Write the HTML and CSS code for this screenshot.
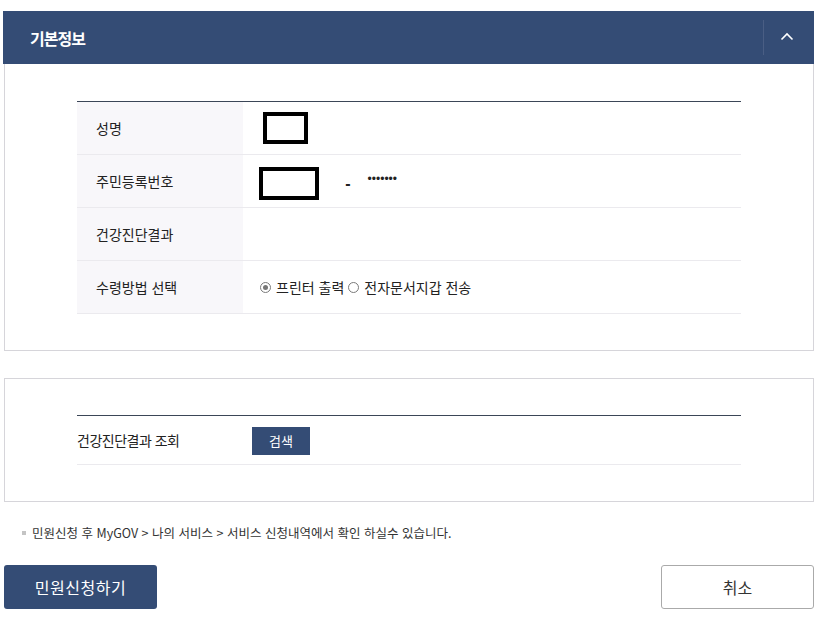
FILE: index.html
```html
<!DOCTYPE html>
<html lang="ko">
<head>
    <meta charset="UTF-8">
    <meta name="viewport" content="width=device-width, initial-scale=1.0">
    <title>기본정보 - 민원신청</title>
    <link rel="stylesheet" href="styles.css">
</head>
<body>
    <div class="page">
        <div class="section-head">
            <h2>기본정보</h2>
            <button type="button" class="toggle-btn" aria-label="접기">
                <svg width="14" height="9" viewBox="0 0 14 9"><path d="M1.5 7.5 L7 2 L12.5 7.5" fill="none" stroke="#fff" stroke-width="1.6"/></svg>
            </button>
        </div>

        <div class="panel panel-top">
            <table class="info-table">
                <tr>
                    <th>성명</th>
                    <td><span class="mask mask-name"></span></td>
                </tr>
                <tr>
                    <th>주민등록번호</th>
                    <td>
                        <span class="mask mask-rrn"></span>
                        <span class="rrn-dash">-</span>
                        <span class="rrn-back">•••••••</span>
                    </td>
                </tr>
                <tr>
                    <th>건강진단결과</th>
                    <td></td>
                </tr>
                <tr>
                    <th>수령방법 선택</th>
                    <td>
                        <label class="radio"><span class="radio-dot checked"></span>프린터 출력</label>
                        <label class="radio"><span class="radio-dot"></span>전자문서지갑 전송</label>
                    </td>
                </tr>
            </table>
        </div>

        <div class="panel panel-search">
            <table class="info-table search-table">
                <tr>
                    <th>건강진단결과 조회</th>
                    <td><button type="button" class="search-btn">검색</button></td>
                </tr>
            </table>
        </div>

        <p class="notice">민원신청 후 MyGOV &gt; 나의 서비스 &gt; 서비스 신청내역에서 확인 하실수 있습니다.</p>

        <div class="btn-row">
            <button type="button" class="btn-apply">민원신청하기</button>
            <button type="button" class="btn-cancel">취소</button>
        </div>
    </div>
</body>
</html>
```

FILE: styles.css
```css
* {
    margin: 0;
    padding: 0;
    box-sizing: border-box;
}

body {
    font-family: 'Noto Sans CJK KR', 'Noto Sans', sans-serif;
    background: #fff;
    color: #222;
}

.page {
    width: 811px;
    margin: 11px 0 0 3px;
}

.section-head {
    height: 53px;
    background: #344c75;
    display: flex;
    align-items: center;
    justify-content: space-between;
}

.section-head h2 {
    color: #fff;
    font-size: 16px;
    font-weight: bold;
    letter-spacing: -1px;
    padding-left: 27px;
}

.toggle-btn {
    width: 51px;
    height: 35px;
    background: none;
    border: none;
    border-left: 1px solid #4a5e84;
    display: flex;
    align-items: center;
    justify-content: center;
    padding: 0 4px 2px 0;
}

.panel {
    margin-left: 1px;
    border: 1px solid #d6d5da;
    padding: 36px 72px 36px 72px;
}

.panel-top {
    border-top: none;
    padding-top: 37px;
}

.panel-search {
    margin-top: 27px;
}

.info-table {
    width: 100%;
    border-collapse: collapse;
    border-top: 1px solid #3b4657;
}

.info-table tr {
    height: 53px;
    border-bottom: 1px solid #ebeaee;
}

.info-table th {
    width: 166px;
    background: #f8f7fa;
    text-align: left;
    font-weight: normal;
    font-size: 14px;
    padding-left: 19px;
}

.info-table td {
    font-size: 14px;
    vertical-align: middle;
}

.mask {
    display: inline-block;
    border: 4px solid #000;
    vertical-align: middle;
}

.mask-name {
    width: 45px;
    height: 32px;
    margin-left: 20px;
}

.mask-rrn {
    width: 60px;
    height: 33px;
    margin-left: 16px;
    margin-top: 4px;
}

.rrn-dash {
    font-family: 'Liberation Sans', Arial, sans-serif;
    font-size: 16px;
    font-weight: bold;
    margin-left: 23px;
    vertical-align: middle;
    position: relative;
    top: 3px;
}

.rrn-back {
    font-family: 'Liberation Sans', Arial, sans-serif;
    font-size: 12px;
    margin-left: 14px;
    vertical-align: middle;
    position: relative;
    top: -2px;
}

.radio {
    display: inline-flex;
    align-items: center;
}

.radio:first-child {
    margin-left: 17px;
}

.radio-dot {
    width: 11px;
    height: 11px;
    border: 1px solid #7a7a7a;
    border-radius: 50%;
    margin-right: 5px;
    position: relative;
    background: #fff;
}

.radio-dot.checked::after {
    content: '';
    position: absolute;
    left: 2px;
    top: 2px;
    width: 5px;
    height: 5px;
    border-radius: 50%;
    background: #777;
}

.search-table tr {
    height: 49px;
}

.search-table th {
    width: 175px;
    background: #fff;
    padding-left: 0;
    letter-spacing: -0.5px;
}

.search-btn {
    width: 58px;
    height: 28px;
    background: #344c75;
    color: #fff;
    border: none;
    font-family: inherit;
    font-size: 13px;
    margin-top: 1px;
}

.notice {
    font-size: 12.5px;
    color: #333;
    margin: 21px 0 0 19px;
    display: flex;
    align-items: center;
}

.notice::before {
    content: '';
    width: 4px;
    height: 4px;
    background: #c4c4c4;
    margin-right: 6px;
}

.btn-row {
    display: flex;
    justify-content: space-between;
    margin-top: 23px;
    padding-left: 1px;
}

.btn-apply {
    width: 153px;
    height: 44px;
    background: #344c75;
    color: #fff;
    border: none;
    border-radius: 3px;
    font-family: inherit;
    font-size: 16px;
    letter-spacing: 0.5px;
}

.btn-cancel {
    width: 153px;
    height: 44px;
    background: #fff;
    color: #333;
    border: 1px solid #aaa;
    border-radius: 3px;
    font-family: inherit;
    font-size: 16px;
}
```
